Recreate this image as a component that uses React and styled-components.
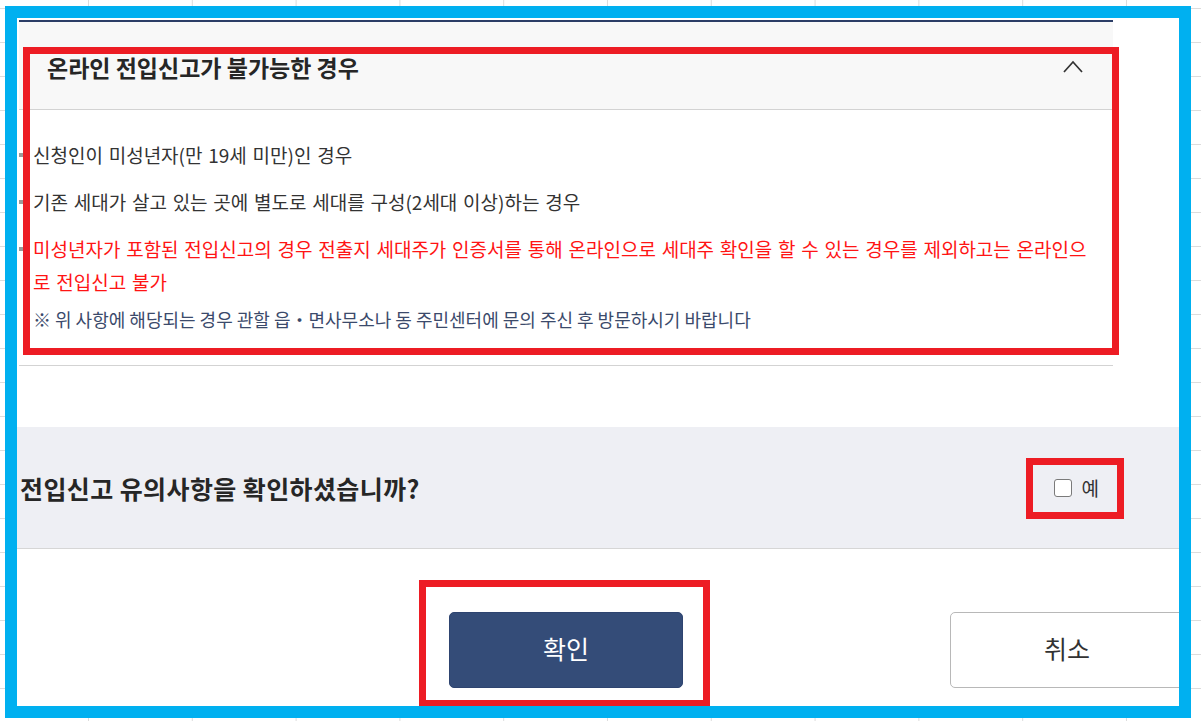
import styled, { createGlobalStyle } from "styled-components";

const GlobalStyle = createGlobalStyle`
  html, body {
    margin: 0;
    padding: 0;
  }
  body {
    width: 1201px;
    height: 721px;
    overflow: hidden;
    box-sizing: border-box;
    padding: 6px 0 0 5px;
    background-color: #ffffff;
    /* spreadsheet grid behind the capture */
    background-image: linear-gradient(to right, #dcdcdc 1px, transparent 1px),
      linear-gradient(to bottom, #dcdcdc 1px, transparent 1px);
    background-size: 103.8px 34px;
    background-position: 88px 8px;
    font-family: "Noto Sans CJK KR", "Noto Sans", sans-serif;
  }
`;

const Frame = styled.div`
  width: 1186px;
  height: 712px;
  box-sizing: border-box;
  border: 12px solid #00b0f0;
  background: #ffffff;
  overflow: hidden;
  display: flex;
  flex-direction: column;
`;

// red annotation boxes laid over the capture
const RedMark = styled.div`
  position: absolute;
  top: ${(p) => p.$t}px;
  right: ${(p) => p.$r}px;
  bottom: ${(p) => p.$b}px;
  left: ${(p) => p.$l}px;
  border: 7px solid #ed1c24;
  pointer-events: none;
`;

const Accordion = styled.section`
  position: relative;
  width: 1094px;
  margin: 2px 0 0 2px;
  border-top: 2px solid #2b3d66;
`;

const AccHeader = styled.div`
  height: 88px;
  box-sizing: border-box;
  display: flex;
  align-items: center;
  justify-content: space-between;
  padding: 2px 30px 0 28px;
  background: #f8f8f8;
  border-bottom: 1px solid #d3d3d3;
`;

const AccTitle = styled.h3`
  margin: 0;
  font-size: 23px;
  font-weight: 700;
  color: #262626;
`;

const AccBody = styled.div`
  padding: 28px 23px 34px 0;
  border-bottom: 1px solid #d3d3d3;
`;

const List = styled.ul`
  list-style: none;
  margin: 0;
  padding: 0;
`;

const Item = styled.li`
  display: flex;
  margin-bottom: 14px;
  font-size: 19px;
  line-height: 33px;
  color: ${(p) => (p.$warn ? "#ff1414" : "#333333")};
  word-spacing: 1.5px;
`;

const Bullet = styled.span`
  flex-shrink: 0;
  width: 4px;
  height: 4px;
  margin: 15px 10px 0 0;
  background: #9a9a9a;
`;

const Note = styled.p`
  margin: -5px 0 0 14px;
  font-size: 18px;
  line-height: 24px;
  color: #3b4a6b;
`;

const ConfirmBand = styled.div`
  margin-top: 61px;
  height: 122px;
  box-sizing: border-box;
  display: flex;
  align-items: center;
  justify-content: space-between;
  padding: 0 80px 0 3px;
  background: #eeeff4;
  border-bottom: 1px solid #d6d6d6;
`;

const Question = styled.h4`
  margin: 0;
  font-size: 25px;
  font-weight: 700;
  letter-spacing: 0.4px;
  color: #262626;
`;

const CheckLabel = styled.label`
  position: relative;
  display: flex;
  align-items: center;
  gap: 10px;
  font-size: 19px;
  line-height: 20px;
  color: #333333;
`;

const Check = styled.input`
  appearance: none;
  margin: 0;
  width: 18px;
  height: 18px;
  box-sizing: border-box;
  border: 1.5px solid #7a7a7a;
  border-radius: 3px;
  background: #ffffff;
`;

const ButtonRow = styled.div`
  margin-top: 63px;
  display: flex;
  gap: 267px;
  padding-left: 432px;
`;

const ButtonWrap = styled.div`
  position: relative;
  flex-shrink: 0;
`;

const Button = styled.button`
  width: 234px;
  height: 76px;
  box-sizing: border-box;
  padding: 0 0 5px;
  font-family: inherit;
  font-size: 25px;
  border-radius: 5px;
  cursor: pointer;
  background: ${(p) => (p.$primary ? "#344c78" : "#ffffff")};
  color: ${(p) => (p.$primary ? "#ffffff" : "#333333")};
  border: 1px solid ${(p) => (p.$primary ? "#2e4470" : "#b8b8b8")};
`;

const Chevron = () => (
  <svg width="20" height="13" viewBox="0 0 20 13">
    <polyline
      points="1,12 10,2 19,12"
      fill="none"
      stroke="#333"
      strokeWidth="1.7"
    />
  </svg>
);

const App = () => {
  return (
    <>
      <GlobalStyle />
      <Frame>
        {/* accordion */}
        <Accordion>
          <AccHeader>
            <AccTitle>온라인 전입신고가 불가능한 경우</AccTitle>
            <Chevron />
          </AccHeader>
          <AccBody>
            <List>
              <Item>
                <Bullet />
                <span>신청인이 미성년자(만 19세 미만)인 경우</span>
              </Item>
              <Item>
                <Bullet />
                <span>기존 세대가 살고 있는 곳에 별도로 세대를 구성(2세대 이상)하는 경우</span>
              </Item>
              <Item $warn>
                <Bullet />
                <span>
                  미성년자가 포함된 전입신고의 경우 전출지 세대주가 인증서를 통해 온라인으로 세대주 확인을 할 수
                  있는 경우를 제외하고는 온라인으로 전입신고 불가
                </span>
              </Item>
            </List>
            <Note>※ 위 사항에 해당되는 경우 관할 읍・면사무소나 동 주민센터에 문의 주신 후 방문하시기 바랍니다</Note>
          </AccBody>
          <RedMark $t={25} $r={-6} $b={11} $l={4} />
        </Accordion>

        {/* confirm question */}
        <ConfirmBand>
          <Question>전입신고 유의사항을 확인하셨습니까?</Question>
          <CheckLabel>
            <Check type="checkbox" />
            예
            <RedMark $t={-20} $r={-25} $b={-21} $l={-28} />
          </CheckLabel>
        </ConfirmBand>

        {/* buttons */}
        <ButtonRow>
          <ButtonWrap>
            <Button $primary>확인</Button>
            <RedMark $t={-32} $r={-27} $b={-19} $l={-30} />
          </ButtonWrap>
          <ButtonWrap>
            <Button>취소</Button>
          </ButtonWrap>
        </ButtonRow>
      </Frame>
    </>
  );
};

export default App;
